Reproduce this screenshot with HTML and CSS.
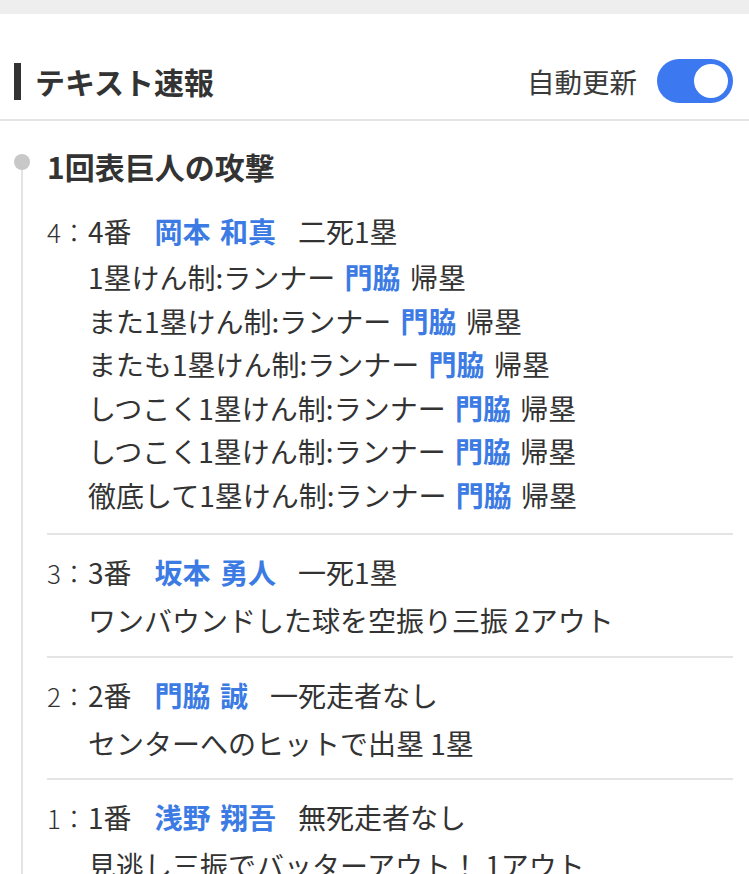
FILE: index.html
```html
<!DOCTYPE html>
<html lang="ja">
<head>
  <meta charset="UTF-8" />
  <meta name="viewport" content="width=device-width, initial-scale=1.0"/>
  <title>テキスト速報</title>
  <link rel="stylesheet" href="styles.css">
</head>
<body>

  <div class="topbar"></div>

  <div class="header">
    <h2 class="title">テキスト速報</h2>
    <div class="auto">
      <span class="auto-label">自動更新</span>
      <span class="switch"><span class="knob"></span></span>
    </div>
  </div>

  <div class="feed">
    <div class="inning">
      <span class="dot"></span>
      <h3 class="inning-title">1回表巨人の攻撃</h3>
    </div>

    <div class="play">
      <div class="batter">
        <span class="num">4：</span>4番<span class="name">岡本 和真</span>二死1塁
      </div>
      <p class="detail">1塁けん制:ランナー <b>門脇</b> 帰塁</p>
      <p class="detail">また1塁けん制:ランナー <b>門脇</b> 帰塁</p>
      <p class="detail">またも1塁けん制:ランナー <b>門脇</b> 帰塁</p>
      <p class="detail">しつこく1塁けん制:ランナー <b>門脇</b> 帰塁</p>
      <p class="detail">しつこく1塁けん制:ランナー <b>門脇</b> 帰塁</p>
      <p class="detail">徹底して1塁けん制:ランナー <b>門脇</b> 帰塁</p>
    </div>

    <div class="play">
      <div class="batter">
        <span class="num">3：</span>3番<span class="name">坂本 勇人</span>一死1塁
      </div>
      <p class="detail">ワンバウンドした球を空振り三振 2アウト</p>
    </div>

    <div class="play">
      <div class="batter">
        <span class="num">2：</span>2番<span class="name">門脇 誠</span>一死走者なし
      </div>
      <p class="detail">センターへのヒットで出塁 1塁</p>
    </div>

    <div class="play">
      <div class="batter">
        <span class="num">1：</span>1番<span class="name">浅野 翔吾</span>無死走者なし
      </div>
      <p class="detail">見逃し三振でバッターアウト！ 1アウト</p>
    </div>
  </div>

</body>
</html>
```

FILE: styles.css
```css
:root {
  --text: #333333;
  --blue: #3b7be3;
  --switch: #3c78ef;
  --line: #e4e4e4;
}

body {
  font-family: "Noto Sans CJK JP", "Noto Sans", sans-serif;
  color: var(--text);
  background-color: #ffffff;
  margin: 0;
  overflow: hidden;
}

.topbar {
  height: 14px;
  background-color: #eeeeee;
}

.header {
  display: flex;
  align-items: center;
  justify-content: space-between;
  padding: 45px 16px 16px 14px;
  border-bottom: 2px solid var(--line);
}

.title {
  margin: 0;
  font-size: 30px;
  font-weight: bold;
  line-height: 37px;
  border-left: 7px solid #333;
  padding-left: 14px;
}

.auto {
  display: flex;
  align-items: center;
  gap: 20px;
}

.auto-label {
  font-size: 27.5px;
  color: #3a3a3a;
}

.switch {
  position: relative;
  width: 76px;
  height: 44px;
  border-radius: 22px;
  background-color: var(--switch);
}

.knob {
  position: absolute;
  top: 5px;
  right: 5px;
  width: 34px;
  height: 34px;
  border-radius: 50%;
  background-color: #ffffff;
}

/* タイムライン */
.feed {
  position: relative;
  padding: 25px 16px 0 47px;
}

.feed::before {
  content: "";
  position: absolute;
  left: 21px;
  top: 38px;
  bottom: 0;
  width: 2px;
  background-color: var(--line);
}

.inning {
  position: relative;
}

.dot {
  position: absolute;
  left: -33px;
  top: 8px;
  width: 16px;
  height: 16px;
  border-radius: 50%;
  background-color: #c8c8c8;
}

.inning-title {
  margin: 0;
  font-size: 30px;
  font-weight: bold;
  line-height: 40px;
}

.play {
  padding: 23px 0 16px;
  border-bottom: 2px solid var(--line);
  font-size: 28px;
}

.play + .play {
  padding-top: 15px;
  padding-bottom: 13px;
}

.batter {
  line-height: 44px;
}

.num {
  display: inline-block;
  width: 41px;
  font-size: 26px;
  font-weight: 300;
}

.name {
  color: var(--blue);
  font-weight: bold;
  margin: 0 22px 0 23px;
  word-spacing: 3px;
}

.detail {
  margin: 0 0 0 41px;
  line-height: 43.5px;
}

.batter + .detail {
  margin-top: 2px;
}

.play + .play .batter + .detail {
  margin-top: 4px;
}

.detail b {
  color: var(--blue);
  margin: 0 3px;
}
```
